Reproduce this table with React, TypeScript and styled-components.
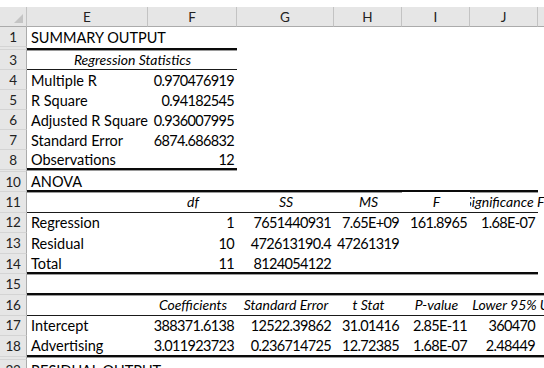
import React from 'react';
import styled, { createGlobalStyle, css } from 'styled-components';

const COLS = '27px 121px 89px 97px 68px 68px 68px 68px';

const GlobalStyle = createGlobalStyle`
  html, body {
    margin: 0;
    padding: 0;
    background: #fff;
    overflow: hidden;
  }
  body {
    font-family: Lato, "Liberation Sans", sans-serif;
  }
`;

const Sheet = styled.div`
  padding-top: 7px;
  width: 544px;
  height: 368px;
  overflow: hidden;
`;

const Line = styled.div<{ $h: number }>`
  display: grid;
  grid-template-columns: ${COLS};
  height: ${p => p.$h}px;
`;

const Corner = styled.div`
  position: relative;
  background: #e6e6e6;
  border-right: 1px solid #c3c3c3;
  border-bottom: 1px solid #ababab;
  &::after {
    content: '';
    position: absolute;
    right: 3px;
    bottom: 3px;
    border-left: 9px solid transparent;
    border-bottom: 9px solid #c4c4c4;
  }
`;

const ColHead = styled.div`
  display: flex;
  align-items: center;
  justify-content: center;
  background: #e6e6e6;
  border-right: 1px solid #c3c3c3;
  border-bottom: 1px solid #ababab;
  font-size: 13.5px;
  color: #222;
`;

const RowHead = styled.div`
  display: flex;
  align-items: center;
  justify-content: center;
  background: #e6e6e6;
  border-right: 1px solid #ababab;
  border-bottom: 1px solid #d4d4d4;
  font-size: 13.5px;
  letter-spacing: -0.3px;
  color: #222;
  overflow: hidden;
`;

type Rule = 'thin' | 'thick';

const Cell = styled.div<{
  $align?: 'l' | 'r' | 'c';
  $italic?: boolean;
  $num?: boolean;
  $rule?: Rule;
  $span?: number;
  $cover?: boolean;
}>`
  display: flex;
  align-items: center;
  justify-content: ${p => (p.$align === 'r' ? 'flex-end' : p.$align === 'c' ? 'center' : 'flex-start')};
  padding: 0 3px 0 4px;
  min-width: 0;
  white-space: nowrap;
  font-size: ${p => (p.$italic ? '14px' : '14.5px')};
  letter-spacing: ${p => (p.$num ? '-0.65px' : 'normal')};
  color: #000;
  font-style: ${p => (p.$italic ? 'italic' : 'normal')};
  grid-column: span ${p => p.$span ?? 1};
  ${p =>
    p.$rule === 'thin' &&
    css`
      border-bottom: 1px solid #1a1a1a;
    `}
  ${p =>
    p.$rule === 'thick' &&
    css`
      border-bottom: 2px solid #0a0a0a;
      box-shadow: 0 1px 0 #9a9a9a;
    `}
  ${p =>
    p.$cover &&
    css`
      position: relative;
      z-index: 1;
      background: #fff;
    `}
`;

type C = { t?: string; a?: 'l' | 'r' | 'c'; i?: boolean; b?: Rule; span?: number; cover?: boolean };
type R = { n: string; h: number; cells: C[] };

const blank = (k: number, b?: Rule): C[] => Array.from({ length: k }, () => ({ b }));
const num = (t: string, b?: Rule): C => ({ t, a: 'r', b });
const head = (t: string, b?: Rule, cover?: boolean): C => ({ t, a: 'c', i: true, b, cover });

const rows: R[] = [
  { n: '1', h: 20, cells: [{ t: 'SUMMARY OUTPUT' }, ...blank(6)] },
  { n: '', h: 3, cells: [...blank(2, 'thick'), ...blank(5)] },
  { n: '3', h: 20, cells: [{ t: 'Regression Statistics', a: 'c', i: true, b: 'thin', span: 2 }, ...blank(5)] },
  { n: '4', h: 20, cells: [{ t: 'Multiple R' }, num('0.970476919'), ...blank(5)] },
  { n: '5', h: 20, cells: [{ t: 'R Square' }, num('0.94182545'), ...blank(5)] },
  { n: '6', h: 20, cells: [{ t: 'Adjusted R Square' }, num('0.936007995'), ...blank(5)] },
  { n: '7', h: 20, cells: [{ t: 'Standard Error' }, num('6874.686832'), ...blank(5)] },
  { n: '8', h: 20, cells: [{ t: 'Observations', b: 'thick' }, num('12', 'thick'), ...blank(5)] },
  { n: '', h: 2, cells: blank(7) },
  { n: '10', h: 20, cells: [{ t: 'ANOVA', b: 'thick' }, ...blank(5, 'thick'), {}] },
  {
    n: '11',
    h: 20.6,
    cells: [{ b: 'thin' }, head('df', 'thin'), head('SS', 'thin'), head('MS', 'thin'), head('F', 'thin', true), head('Significance F', 'thin'), {}],
  },
  {
    n: '12',
    h: 20.6,
    cells: [{ t: 'Regression' }, num('1'), num('7651440931'), num('7.65E+09'), num('161.8965'), num('1.68E-07'), {}],
  },
  { n: '13', h: 20.6, cells: [{ t: 'Residual' }, num('10'), num('472613190.4'), num('47261319'), {}, {}, {}] },
  {
    n: '14',
    h: 20.6,
    cells: [{ t: 'Total', b: 'thick' }, num('11', 'thick'), num('8124054122', 'thick'), ...blank(3, 'thick'), {}],
  },
  { n: '15', h: 20.6, cells: blank(7, 'thick') },
  {
    n: '16',
    h: 20.6,
    cells: [
      { b: 'thin' },
      head('Coefficients', 'thin'),
      head('Standard Error', 'thin'),
      head('t Stat', 'thin'),
      head('P-value', 'thin'),
      head('Lower 95%', 'thin'),
      head('Upper 95%', 'thin'),
    ],
  },
  {
    n: '17',
    h: 20.6,
    cells: [{ t: 'Intercept' }, num('388371.6138'), num('12522.39862'), num('31.01416'), num('2.85E-11'), num('360470'), {}],
  },
  {
    n: '18',
    h: 20.6,
    cells: [
      { t: 'Advertising', b: 'thick' },
      num('3.011923723', 'thick'),
      num('0.236714725', 'thick'),
      num('12.72385', 'thick'),
      num('1.68E-07', 'thick'),
      num('2.48449', 'thick'),
      { b: 'thick' },
    ],
  },
  { n: '', h: 3.5, cells: blank(7) },
  { n: '22', h: 20, cells: [{ t: 'RESIDUAL OUTPUT' }, ...blank(6)] },
];

const letters = ['E', 'F', 'G', 'H', 'I', 'J', 'K'];

export default function App() {
  return (
    <>
      <GlobalStyle />
      <Sheet>
        <Line $h={20}>
          <Corner />
          {letters.map(l => (
            <ColHead key={l}>{l === 'K' ? '' : l}</ColHead>
          ))}
        </Line>
        {rows.map((r, ri) => (
          <Line key={ri} $h={r.h}>
            <RowHead>{r.n}</RowHead>
            {r.cells.map((c, ci) => (
              <Cell
                key={ci}
                $align={c.a}
                $italic={c.i}
                $num={c.a === 'r'}
                $rule={c.b}
                $span={c.span}
                $cover={c.cover}
              >
                {c.t}
              </Cell>
            ))}
          </Line>
        ))}
      </Sheet>
    </>
  );
}
